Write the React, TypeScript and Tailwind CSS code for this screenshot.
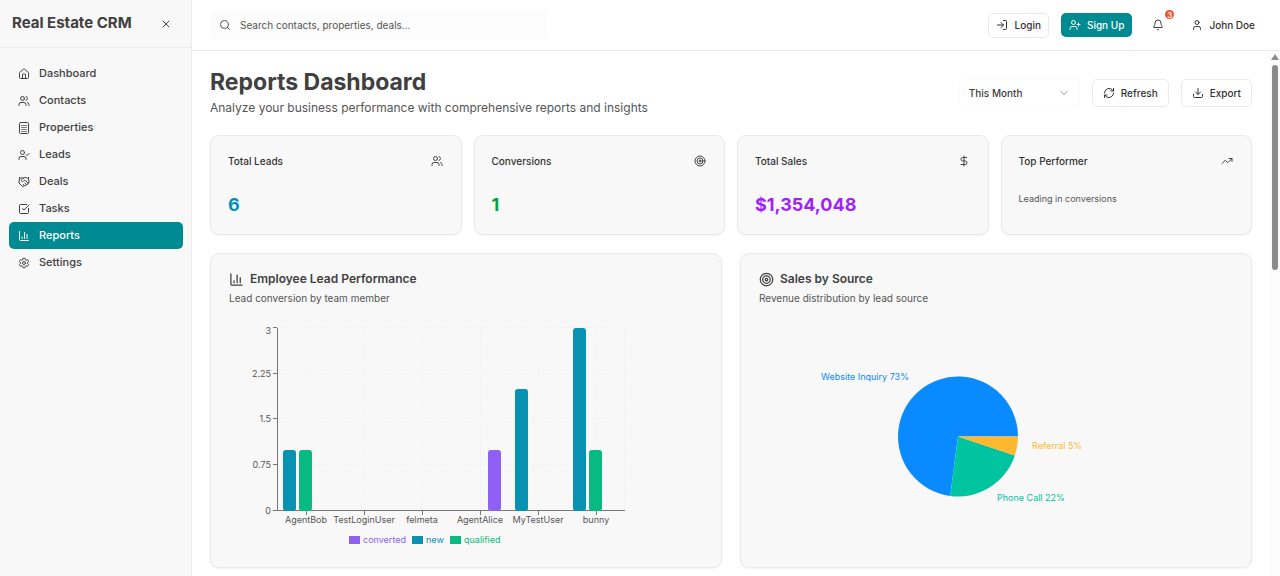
import React from "react";
import {
  Bell,
  ChartColumn,
  ChevronDown,
  DollarSign,
  Download,
  Handshake,
  House,
  LogIn,
  RefreshCw,
  Search,
  Settings,
  SquareCheckBig,
  Target,
  TrendingUp,
  User,
  UserCheck,
  UserPlus,
  Users,
  X,
} from "lucide-react";

type IconType = React.ComponentType<{ className?: string }>;

function OfficeIcon({ className }: { className?: string }) {
  return (
    <svg
      viewBox="0 0 24 24"
      className={className}
      fill="none"
      stroke="currentColor"
      strokeWidth="2"
      strokeLinecap="round"
      strokeLinejoin="round"
    >
      <rect x="3" y="1" width="18" height="22" rx="2" />
      <path d="M7 7h10M7 11h10M7 15h10M7 19h10" strokeWidth="1.4" />
    </svg>
  );
}

const navItems: { label: string; icon: IconType }[] = [
  { label: "Dashboard", icon: House },
  { label: "Contacts", icon: Users },
  { label: "Properties", icon: OfficeIcon },
  { label: "Leads", icon: UserCheck },
  { label: "Deals", icon: Handshake },
  { label: "Tasks", icon: SquareCheckBig },
  { label: "Reports", icon: ChartColumn },
  { label: "Settings", icon: Settings },
];

const outlineButton =
  "flex items-center gap-[6px] rounded-[5px] border border-[#ebebeb] bg-white text-[10px] font-medium text-[#333]";

function Sidebar() {
  return (
    <aside className="flex w-48 shrink-0 flex-col border-r border-[#ebebeb] bg-[#f8f8f8]">
      <div className="flex h-12 items-center justify-between border-b border-[#ebebeb] pr-[19px] pl-3">
        <span className="text-[15px] font-bold whitespace-nowrap">Real Estate CRM</span>
        <button type="button" aria-label="Close sidebar">
          <X className="size-3" />
        </button>
      </div>
      <nav className="flex flex-col pt-3 pr-2 pl-[9px]">
        {navItems.map(({ label, icon: Icon }) => (
          <a
            key={label}
            href={"#" + label.toLowerCase()}
            className={
              label === "Reports"
                ? "flex h-[27px] items-center gap-[9px] rounded-[5px] bg-[#008a91] px-[9px] text-[11px] font-medium text-white"
                : "flex h-[27px] items-center gap-[9px] rounded-[5px] px-[9px] text-[11px] font-medium"
            }
          >
            <Icon className="size-3" />
            {label}
          </a>
        ))}
      </nav>
    </aside>
  );
}

function Header() {
  return (
    <header className="flex h-[51px] shrink-0 items-center justify-between border-b border-[#ebebeb] bg-white px-[18px]">
      <label className="flex h-[30px] w-[337px] items-center gap-[9px] rounded-[5px] bg-[#fcfcfc] px-[9px]">
        <Search className="size-3 shrink-0 text-[#555]" />
        <input
          type="search"
          aria-label="Search"
          placeholder="Search contacts, properties, deals..."
          className="w-full bg-transparent text-[10px] outline-none placeholder:text-[#555]"
        />
      </label>
      <div className="flex items-center gap-3">
        <button type="button" className={outlineButton + " h-[25px] px-[7px]"}>
          <LogIn className="size-3" />
          Login
        </button>
        <button
          type="button"
          className="flex h-6 items-center gap-[6px] rounded-[5px] bg-[#008a91] px-2 text-[10px] font-medium text-white"
        >
          <UserPlus className="size-3" />
          Sign Up
        </button>
        <button type="button" aria-label="Notifications" className="relative flex h-6 w-7 items-center justify-center">
          <Bell className="size-3" />
          <span className="absolute -top-[3px] -right-[2px] flex size-[9px] items-center justify-center rounded-full bg-[#f4512c] text-[8px] leading-none font-medium text-white">
            3
          </span>
        </button>
        <button type="button" className="flex h-6 items-center gap-[6px] px-[7px] text-[10px] font-medium text-[#333]">
          <User className="size-3" />
          John Doe
        </button>
      </div>
    </header>
  );
}

function StatCard({ title, icon: Icon, children }: { title: string; icon: IconType; children: React.ReactNode }) {
  return (
    <section className="flex h-[100px] flex-col rounded-[9px] border border-[#e9e9e9] bg-[#f8f8f8] pt-[17px] pr-[18px] pl-[17px] shadow-xs">
      <div className="flex h-4 items-center justify-between">
        <h2 className="text-[10px] font-medium text-[#333]">{title}</h2>
        <Icon className="size-3 text-[#444]" />
      </div>
      <div className="mt-6">{children}</div>
    </section>
  );
}

function ChartCard({
  title,
  subtitle,
  icon: Icon,
  children,
}: {
  title: string;
  subtitle: string;
  icon: IconType;
  children: React.ReactNode;
}) {
  return (
    <section className="rounded-[9px] border border-[#e9e9e9] bg-[#f8f8f8] p-[18px] shadow-xs">
      <h2 className="flex h-[14px] items-center gap-[6px] text-[12px] font-semibold">
        <Icon className="size-[15px]" />
        {title}
      </h2>
      <p className="mt-[5px] text-[10px] leading-[15px] text-[#555]">{subtitle}</p>
      <div className="mt-[18px]">{children}</div>
    </section>
  );
}

const yTicks = [
  { label: "3", y: 4, textY: 7 },
  { label: "2.25", y: 50, textY: 50 },
  { label: "1.5", y: 95, textY: 95 },
  { label: "0.75", y: 141, textY: 141 },
  { label: "0", y: 187, textY: 187 },
];
const agents = ["AgentBob", "TestLoginUser", "felmeta", "AgentAlice", "MyTestUser", "bunny"];
const agentX = (index: number) => 77 + index * 58;
const bars = [
  { agent: 0, offset: -23, value: 1, color: "#0891b2" },
  { agent: 0, offset: -7, value: 1, color: "#08b981" },
  { agent: 3, offset: 8, value: 1, color: "#8f60f6" },
  { agent: 4, offset: -23, value: 2, color: "#0891b2" },
  { agent: 5, offset: -23, value: 3, color: "#0891b2" },
  { agent: 5, offset: -7, value: 1, color: "#08b981" },
];
const legend = [
  { label: "converted", color: "#8f60f6", x: 120 },
  { label: "new", color: "#0891b2", x: 183 },
  { label: "qualified", color: "#08b981", x: 221 },
];

function LeadChart() {
  return (
    <svg viewBox="0 0 474 225" className="block w-full text-[9px]" role="img" aria-label="Leads per employee">
      <g stroke="#f2f2f2" strokeDasharray="3 2">
        {yTicks.slice(0, 4).map((t) => (
          <path key={t.label} d={`M48 ${t.y - 0.5}H396`} />
        ))}
        {agents.map((a, i) => (
          <path key={a} d={`M${agentX(i) + 0.5} 4V187`} />
        ))}
        <path d="M395.5 4V187" />
      </g>
      <g stroke="#777" fill="none">
        <path d="M48.5 4V187M48 186.5H396" />
        {yTicks.map((t) => (
          <path key={t.label} d={`M44 ${t.y - 0.5}H48`} />
        ))}
        {agents.map((a, i) => (
          <path key={a} d={`M${agentX(i) + 0.5} 187V191`} />
        ))}
      </g>
      {bars.map((b) => (
        <rect
          key={`${b.agent}${b.offset}`}
          x={agentX(b.agent) + b.offset}
          y={187 - b.value * 61}
          width="13"
          height={b.value * 61}
          rx="3"
          fill={b.color}
        />
      ))}
      <g fill="#555">
        {yTicks.map((t) => (
          <text key={t.label} x="42" y={t.textY + 3} textAnchor="end">
            {t.label}
          </text>
        ))}
        {agents.map((a, i) => (
          <text key={a} x={agentX(i)} y="199" textAnchor="middle">
            {a}
          </text>
        ))}
      </g>
      {legend.map((l) => (
        <g key={l.label} fill={l.color}>
          <rect x={l.x} y="212" width="11" height="8" />
          <text x={l.x + 14} y="219">
            {l.label}
          </text>
        </g>
      ))}
    </svg>
  );
}

function SourceChart() {
  return (
    <svg viewBox="0 0 474 225" className="block w-full text-[9px]" role="img" aria-label="Sales by source">
      <path d="M199 112.5L191.2 172A60 60 0 1 1 259 112.5Z" fill="#0a8aff" />
      <path d="M199 112.5L255.9 131.5A60 60 0 0 1 191.2 172Z" fill="#00c4a0" />
      <path d="M199 112.5H259A60 60 0 0 1 255.9 131.5Z" fill="#ffb82e" />
      <text x="150" y="56" textAnchor="end" fill="#0a8aff">
        Website Inquiry 73%
      </text>
      <text x="273" y="125" fill="#ffb82e">
        Referral 5%
      </text>
      <text x="238" y="177" fill="#00c4a0">
        Phone Call 22%
      </text>
    </svg>
  );
}

function ScrollTrack() {
  return (
    <div aria-hidden="true" className="flex w-[10px] shrink-0 flex-col items-center bg-[#fcfcfc] pt-[3px]">
      <svg viewBox="0 0 8 6" className="h-[6px] w-2">
        <path d="M4 0L8 6H0Z" fill="#8b8b8b" />
      </svg>
      <div className="mt-[5px] h-[205px] w-[6px] rounded-full bg-[#8b8b8b]" />
    </div>
  );
}

export default function App() {
  return (
    <div className="flex h-screen overflow-hidden bg-white font-['Inter','Liberation_Sans',sans-serif] text-[#404040]">
      <Sidebar />
      <div className="flex min-w-0 flex-1 flex-col">
        <Header />
        <div className="flex min-h-0 flex-1">
          <main className="flex min-w-0 flex-1 flex-col gap-[18px] overflow-hidden p-[18px]">
            <div className="flex items-center justify-between">
              <div>
                <h1 className="text-[23px] leading-[27px] font-bold">Reports Dashboard</h1>
                <p className="mt-[3px] text-[12px] leading-[18px] text-[#555]">
                  Analyze your business performance with comprehensive reports and insights
                </p>
              </div>
              <div className="flex items-center gap-3">
                <div className="relative flex items-center">
                  <select
                    aria-label="Period"
                    className="h-7 w-[121px] appearance-none rounded-[5px] border border-[#fafafa] bg-white px-[9px] text-[10px] font-medium"
                  >
                    <option>This Month</option>
                  </select>
                  <ChevronDown className="pointer-events-none absolute right-[10px] size-3 text-[#999]" />
                </div>
                <button type="button" className={outlineButton + " h-7 px-[10px]"}>
                  <RefreshCw className="size-3" />
                  Refresh
                </button>
                <button type="button" className={outlineButton + " h-7 px-[10px]"}>
                  <Download className="size-3" />
                  Export
                </button>
              </div>
            </div>

            <div className="grid grid-cols-4 gap-3">
              <StatCard title="Total Leads" icon={Users}>
                <p className="text-[18px] leading-6 font-bold text-[#0092b8]">6</p>
              </StatCard>
              <StatCard title="Conversions" icon={Target}>
                <p className="text-[18px] leading-6 font-bold text-[#00a63e]">1</p>
              </StatCard>
              <StatCard title="Total Sales" icon={DollarSign}>
                <p className="text-[18px] leading-6 font-bold text-[#9f22fb]">$1,354,048</p>
              </StatCard>
              <StatCard title="Top Performer" icon={TrendingUp}>
                <p className="text-[9px] leading-3 text-[#555]">Leading in conversions</p>
              </StatCard>
            </div>

            <div className="grid grid-cols-2 gap-[18px]">
              <ChartCard title="Employee Lead Performance" subtitle="Lead conversion by team member" icon={ChartColumn}>
                <LeadChart />
              </ChartCard>
              <ChartCard title="Sales by Source" subtitle="Revenue distribution by lead source" icon={Target}>
                <SourceChart />
              </ChartCard>
            </div>
          </main>
          <ScrollTrack />
        </div>
      </div>
    </div>
  );
}
